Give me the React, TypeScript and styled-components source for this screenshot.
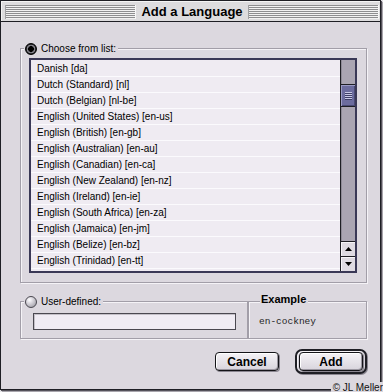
import React from 'react';
import styled, { createGlobalStyle } from 'styled-components';

const Global = createGlobalStyle`
  html, body { margin: 0; padding: 0; background: #e4e2e6; }
  body {
    width: 383px; height: 392px; overflow: hidden;
    font-family: "Liberation Sans", Arial, sans-serif;
    -webkit-font-smoothing: none;
  }
`;

const BG = '#dcd8df';

const Window = styled.div`
  position: relative;
  box-sizing: border-box;
  width: 381px;
  height: 390px;
  border: 1px solid #1e1e24;
  box-shadow: 1px 1px 0 #55525a, 2px 2px 0 #a8a5ac;
  background: ${BG};
  display: flex;
  flex-direction: column;
`;

const TitleBar = styled.div`
  height: 20px;
  border-bottom: 1px solid #1e1e24;
  background: #dddcde;
  box-shadow: inset 1px 1px 0 #f4f4f4;
  display: flex;
  align-items: center;
  gap: 5px;
  padding: 0 1px 0 4px;
`;

const Stripes = styled.div`
  flex: 1;
  height: 14px;
  margin-top: 1px;
  background: repeating-linear-gradient(to bottom, #8e8e90 0 1px, #f2f2f2 1px 2px);
  box-shadow: inset 1px 0 0 #a0a0a2, inset -1px 0 0 #f8f8f8;
`;

const Title = styled.div`
  font-weight: bold;
  font-size: 13px;
  color: #000;
  white-space: nowrap;
`;

const Content = styled.div`
  flex: 1;
  display: flex;
  flex-direction: column;
  padding: 26px 13px 0 19px;
`;

const Frame = styled.div<{ $pad: string; $width?: number; $grow?: boolean }>`
  position: relative;
  box-sizing: border-box;
  border: 1px solid #a29ea8;
  box-shadow: inset 1px 1px 0 #f5f3f7, 1px 1px 0 #f5f3f7;
  padding: ${p => p.$pad};
  ${p => (p.$width ? `width: ${p.$width}px;` : '')}
  ${p => (p.$grow ? 'flex: 1;' : '')}
`;

const Legend = styled.div<{ $top: number; $left: number; $bold?: boolean }>`
  position: absolute;
  top: ${p => p.$top}px;
  left: ${p => p.$left}px;
  height: 13px;
  display: flex;
  align-items: center;
  gap: 4px;
  padding: 0 2px 0 1px;
  background: ${BG};
  font-size: ${p => (p.$bold ? 11 : 10)}px;
  font-weight: ${p => (p.$bold ? 'bold' : 'normal')};
  color: #000;
  white-space: nowrap;
`;

const Radio = styled.span<{ $on?: boolean }>`
  box-sizing: border-box;
  width: 12px;
  height: 12px;
  border-radius: 50%;
  border: 1px solid ${p => (p.$on ? '#000' : '#4a4850')};
  background: ${p =>
    p.$on
      ? 'radial-gradient(circle at 50% 50%, #000 0 2.6px, #5a5860 3px, #9a98a0 4px, #202024 4.6px)'
      : 'radial-gradient(circle at 35% 30%, #ffffff 0, #e4e2e8 25%, #a8a6ae 80%)'};
`;

const ListBox = styled.div`
  height: 215px;
  box-sizing: border-box;
  border: 2px solid #3a3856;
  background: #efebf2;
  display: flex;
`;

const Rows = styled.div`
  flex: 1;
  overflow: hidden;
  padding-top: 1px;
`;

const Row = styled.div`
  box-sizing: border-box;
  height: 16px;
  line-height: 15px;
  padding-left: 6px;
  border-bottom: 1px solid #fbfafd;
  font-size: 10px;
  color: #000;
  white-space: nowrap;
`;

const ScrollBar = styled.div`
  width: 14px;
  border-left: 1px solid #1e1e24;
  display: flex;
  flex-direction: column;
`;

const Track = styled.div`
  flex: 1;
  background: #aaa5b2;
  box-shadow: inset 1px 0 0 #8e8a96;
`;

const Thumb = styled.div<{ $offset: number }>`
  margin-top: ${p => p.$offset}px;
  height: 23px;
  box-sizing: border-box;
  border-top: 1px solid #1e1e24;
  border-bottom: 1px solid #1e1e24;
  background: #6c6c9e;
  box-shadow: inset 1px 1px 0 #9a9ac4, inset -1px -1px 0 #4a4a74;
  display: flex;
  align-items: center;
  justify-content: center;
`;

const Grip = styled.div`
  width: 7px;
  height: 8px;
  background: repeating-linear-gradient(to bottom, #c8c8e6 0 1px, #3e3e66 1px 2px);
`;

const ArrowButton = styled.div`
  height: 15px;
  box-sizing: border-box;
  border-top: 1px solid #1e1e24;
  background: #dedae2;
  box-shadow: inset 1px 1px 0 #f6f4f8;
  display: flex;
  align-items: center;
  justify-content: center;
`;

const BottomRow = styled.div`
  margin-top: 18px;
  display: flex;
`;

const TextField = styled.input`
  display: block;
  width: 100%;
  height: 17px;
  box-sizing: border-box;
  margin: 0;
  padding: 0;
  border: 1px solid #4a4850;
  background: #f0ecf4;
  box-shadow: inset 1px 1px 0 #c4c0c8;
  outline: none;
`;

const ExampleBody = styled.div`
  height: 100%;
  display: flex;
  align-items: center;
  padding-top: 2px;
  box-sizing: border-box;
  font-family: "Liberation Mono", "DejaVu Sans Mono", monospace;
  font-size: 9.5px;
  color: #222;
`;

const ButtonRow = styled.div`
  margin-top: 10px;
  display: flex;
  justify-content: flex-end;
  align-items: center;
  gap: 16px;
`;

const Button = styled.button`
  width: 64px;
  height: 19px;
  box-sizing: border-box;
  padding: 0;
  margin: 0;
  border: 1px solid #141418;
  border-radius: 4px;
  background: linear-gradient(#f4f2f6, #d8d4dc);
  box-shadow: inset 1px 1px 0 #ffffff, inset -1px -1px 0 #9a96a0, 1px 1px 0 #8a8690;
  font-family: "Liberation Sans", Arial, sans-serif;
  font-weight: bold;
  font-size: 12px;
  color: #000;
`;

const DefaultRing = styled.div`
  border: 2px solid #1e1e24;
  border-radius: 7px;
  padding: 1px 2px;
  background: #d6d2da;
  box-shadow: inset 1px 1px 0 #f4f2f6, 1px 1px 0 #8a8690;
  display: flex;
`;

const Copyright = styled.div`
  position: absolute;
  right: -3px;
  bottom: -4px;
  font-size: 10px;
  color: #111;
  background: ${BG};
  padding-left: 2px;
  white-space: nowrap;
`;

const languages = [
  'Danish [da]',
  'Dutch (Standard) [nl]',
  'Dutch (Belgian) [nl-be]',
  'English (United States) [en-us]',
  'English (British) [en-gb]',
  'English (Australian) [en-au]',
  'English (Canadian) [en-ca]',
  'English (New Zealand) [en-nz]',
  'English (Ireland) [en-ie]',
  'English (South Africa) [en-za]',
  'English (Jamaica) [en-jm]',
  'English (Belize) [en-bz]',
  'English (Trinidad) [en-tt]',
];

const Arrow = ({ up }: { up?: boolean }) => (
  <svg width="7" height="4" viewBox="0 0 7 4">
    <polygon points={up ? '3.5,0 7,4 0,4' : '0,0 7,0 3.5,4'} fill="#000" />
  </svg>
);

export default function App() {
  return (
    <>
      <Global />
      <Window>
        <TitleBar>
          <Stripes />
          <Title>Add a Language</Title>
          <Stripes />
        </TitleBar>
        <Content>
          <Frame $pad="9px 9px 9px 8px">
            <Legend $top={-7} $left={3}>
              <Radio $on />
              <span>Choose from list:</span>
            </Legend>
            <ListBox>
              <Rows>
                {languages.map(l => (
                  <Row key={l}>{l}</Row>
                ))}
              </Rows>
              <ScrollBar>
                <Track>
                  <Thumb $offset={24}>
                    <Grip />
                  </Thumb>
                </Track>
                <ArrowButton>
                  <Arrow up />
                </ArrowButton>
                <ArrowButton>
                  <Arrow />
                </ArrowButton>
              </ScrollBar>
            </ListBox>
          </Frame>
          <BottomRow>
            <Frame $pad="11px 11px 8px 12px" $width={228}>
              <Legend $top={-7} $left={3}>
                <Radio />
                <span>User-defined:</span>
              </Legend>
              <TextField defaultValue="" />
            </Frame>
            <Frame $pad="0 10px" $grow>
              <Legend $top={-10} $left={11} $bold>
                <span>Example</span>
              </Legend>
              <ExampleBody>en-cockney</ExampleBody>
            </Frame>
          </BottomRow>
          <ButtonRow>
            <Button>Cancel</Button>
            <DefaultRing>
              <Button>Add</Button>
            </DefaultRing>
          </ButtonRow>
        </Content>
        <Copyright>© JL Meller</Copyright>
      </Window>
    </>
  );
}
